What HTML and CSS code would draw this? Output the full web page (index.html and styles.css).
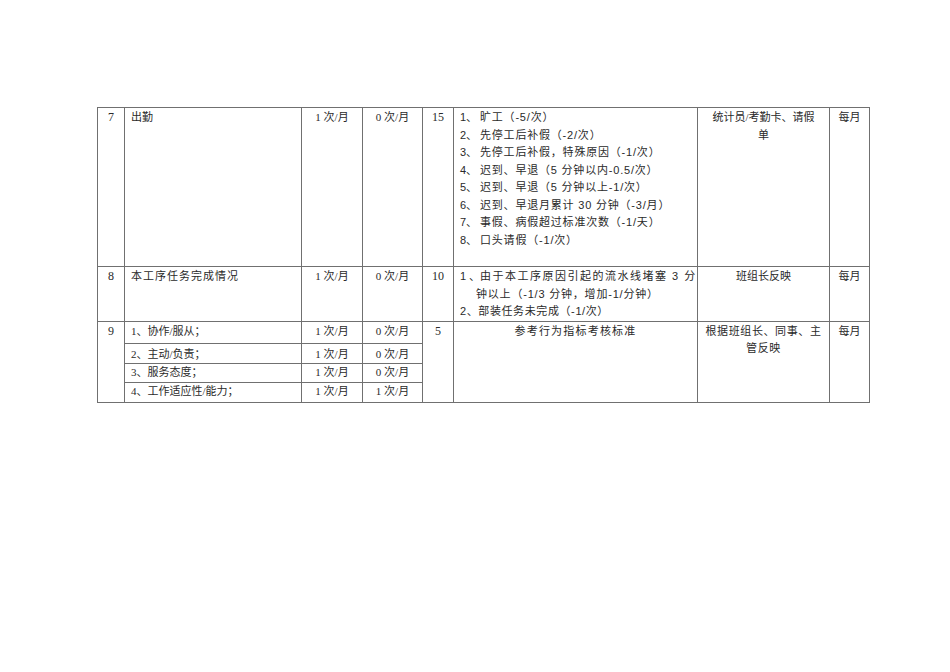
FILE: index.html
```html
<!DOCTYPE html>
<html lang="zh-CN">
<head>
<meta charset="utf-8">
<title>考核表</title>
<link rel="stylesheet" href="styles.css">
</head>
<body>
<div class="page">
<table class="sheet">
  <colgroup>
    <col class="c-no"><col class="c-item"><col class="c-freq"><col class="c-std"><col class="c-score"><col class="c-rule"><col class="c-src"><col class="c-cycle">
  </colgroup>
  <tr class="r7">
    <td class="ctr num">7</td>
    <td class="item">出勤</td>
    <td class="ctr">1 次/月</td>
    <td class="ctr">0 次/月</td>
    <td class="ctr num">15</td>
    <td class="rule">
      <div class="li"><span class="n">1、</span><span>旷工（-5/次）</span></div>
      <div class="li"><span class="n">2、</span><span>先停工后补假（-2/次）</span></div>
      <div class="li"><span class="n">3、</span><span>先停工后补假，特殊原因（-1/次）</span></div>
      <div class="li"><span class="n">4、</span><span>迟到、早退（5 分钟以内-0.5/次）</span></div>
      <div class="li"><span class="n">5、</span><span>迟到、早退（5 分钟以上-1/次）</span></div>
      <div class="li"><span class="n">6、</span><span>迟到、早退月累计 30 分钟（-3/月）</span></div>
      <div class="li"><span class="n">7、</span><span>事假、病假超过标准次数（-1/天）</span></div>
      <div class="li"><span class="n">8、</span><span>口头请假（-1/次）</span></div>
    </td>
    <td class="ctr">统计员/考勤卡、请假<br>单</td>
    <td class="ctr">每月</td>
  </tr>
  <tr class="r8">
    <td class="ctr num">8</td>
    <td class="item wide">本工序任务完成情况</td>
    <td class="ctr">1 次/月</td>
    <td class="ctr">0 次/月</td>
    <td class="ctr num">10</td>
    <td class="rule">
      <div class="just"><span class="n">1、</span>由于本工序原因引起的流水线堵塞 3 分</div>
      <div class="cont">钟以上（-1/3 分钟，增加-1/分钟）</div>
      <div class="plain">2、部装任务未完成（-1/次）</div>
    </td>
    <td class="ctr">班组长反映</td>
    <td class="ctr">每月</td>
  </tr>
  <tr class="r9a">
    <td class="ctr num" rowspan="4">9</td>
    <td class="item">1、协作/服从；</td>
    <td class="ctr">1 次/月</td>
    <td class="ctr">0 次/月</td>
    <td class="ctr num" rowspan="4">5</td>
    <td class="ctr spaced" rowspan="4">参考行为指标考核标准</td>
    <td class="ctr spaced-s" rowspan="4">根据班组长、同事、主<br>管反映</td>
    <td class="ctr" rowspan="4">每月</td>
  </tr>
  <tr class="r9b">
    <td class="item sub">2、主动/负责；</td>
    <td class="ctr sub">1 次/月</td>
    <td class="ctr sub">0 次/月</td>
  </tr>
  <tr class="r9c">
    <td class="item">3、服务态度；</td>
    <td class="ctr">1 次/月</td>
    <td class="ctr">0 次/月</td>
  </tr>
  <tr class="r9d">
    <td class="item">4、工作适应性/能力；</td>
    <td class="ctr">1 次/月</td>
    <td class="ctr">1 次/月</td>
  </tr>
</table>
</div>
</body>
</html>
```
FILE: styles.css
```css
html, body {
  margin: 0;
  padding: 0;
  background: #ffffff;
}
.page {
  padding: 107px 0 0 97px;
}
.sheet {
  border-collapse: collapse;
  table-layout: fixed;
  width: 772px;
  font-family: "Liberation Serif", "Noto Sans CJK SC", serif;
  font-size: 11.5px;
  line-height: 17.5px;
  color: #2a2a2a;
}
.c-no { width: 27px; }
.c-item { width: 177px; }
.c-freq { width: 61px; }
.c-std { width: 60px; }
.c-score { width: 31px; }
.c-rule { width: 244px; }
.c-src { width: 132px; }
.c-cycle { width: 40px; }
.sheet td {
  border: 1px solid #707070;
  vertical-align: top;
  padding: 1px 4px 0 4px;
  white-space: nowrap;
  font-size: 11px;
}
.sheet td.ctr { text-align: center; }
.sheet td.num { font-size: 12px; }
.sheet td.item { padding-left: 6px; }
.sheet td.wide { letter-spacing: 1px; }
.r7 { height: 159px; }
.r8 { height: 54px; }
.r9a { height: 22px; }
.r9b { height: 20px; }
.r9c { height: 19px; }
.r9d { height: 20px; }
.r9b td, .r9c td, .r9d td { padding-top: 0; }
.sheet td.sub { padding-top: 2px; }
.sheet td.rule {
  padding-left: 6px;
  padding-right: 4px;
  font-family: "Liberation Sans", "Noto Sans CJK SC", sans-serif;
  letter-spacing: 0.8px;
}
.li { display: flex; }
.li .n { width: 20px; flex: none; letter-spacing: 0; }
.just {
  text-align: justify;
  text-align-last: justify;
  letter-spacing: 1.5px;
}
.just .n { display: inline-block; width: 20px; letter-spacing: 0; }
.cont { padding-left: 16px; }
.plain { letter-spacing: 0.6px; }
.spaced { letter-spacing: 1.2px; }
.spaced-s { letter-spacing: 0.6px; }
```
